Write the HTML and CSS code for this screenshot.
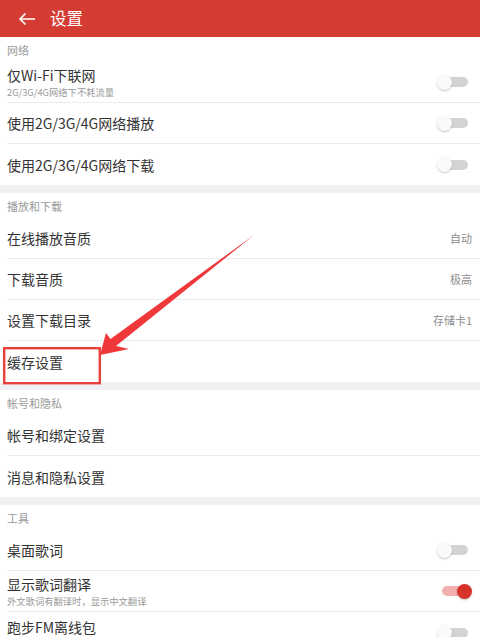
FILE: index.html
```html
<!DOCTYPE html>
<html lang="zh">
<head>
<meta charset="utf-8">
<link rel="stylesheet" href="styles.css">
</head>
<body>
<div class="page">
  <header class="topbar">
    <svg class="back" width="18" height="14" viewBox="0 0 18 14"><path d="M17 7H2M7.5 1.5L2 7l5.5 5.5" fill="none" stroke="#fff" stroke-width="1.6"/></svg>
    <span class="title">设置</span>
  </header>

  <section class="section">
    <div class="sec-title">网络</div>
    <div class="row">
      <div class="text"><div class="label">仅Wi-Fi下联网</div><div class="sub">2G/3G/4G网络下不耗流量</div></div>
      <span class="switch"><span class="track"></span><span class="thumb"></span></span>
    </div>
    <div class="row">
      <div class="label">使用2G/3G/4G网络播放</div>
      <span class="switch"><span class="track"></span><span class="thumb"></span></span>
    </div>
    <div class="row last">
      <div class="label">使用2G/3G/4G网络下载</div>
      <span class="switch"><span class="track"></span><span class="thumb"></span></span>
    </div>
  </section>

  <section class="section">
    <div class="sec-title">播放和下载</div>
    <div class="row"><div class="label">在线播放音质</div><span class="value">自动</span></div>
    <div class="row"><div class="label">下载音质</div><span class="value">极高</span></div>
    <div class="row"><div class="label">设置下载目录</div><span class="value">存储卡1</span></div>
    <div class="row last"><div class="label">缓存设置</div></div>
  </section>

  <section class="section">
    <div class="sec-title">帐号和隐私</div>
    <div class="row"><div class="label">帐号和绑定设置</div></div>
    <div class="row last"><div class="label">消息和隐私设置</div></div>
  </section>

  <section class="section">
    <div class="sec-title">工具</div>
    <div class="row">
      <div class="label">桌面歌词</div>
      <span class="switch"><span class="track"></span><span class="thumb"></span></span>
    </div>
    <div class="row">
      <div class="text"><div class="label">显示歌词翻译</div><div class="sub">外文歌词有翻译时，显示中文翻译</div></div>
      <span class="switch on"><span class="track"></span><span class="thumb"></span></span>
    </div>
    <div class="row last">
      <div class="label raised">跑步FM离线包</div>
      <span class="switch"><span class="track"></span><span class="thumb"></span></span>
    </div>
  </section>

  <svg class="annot" width="480" height="637" viewBox="0 0 480 637">
    <rect x="4.2" y="348.2" width="95.6" height="35" fill="none" stroke="#e8403b" stroke-width="2.4"/>
    <polygon points="100,355 106,333 110.5,339 254,235 116,346 129,349" fill="#f0383a"/>
  </svg>
</div>
</body>
</html>
```

FILE: styles.css
```css
* { box-sizing: border-box; }
html, body { margin: 0; padding: 0; }
body {
  background: #f0f0f2;
  font-family: "Noto Sans CJK SC", "Noto Sans", "Liberation Sans", sans-serif;
  color: #333;
}
.page {
  position: relative;
  width: 480px;
  height: 637px;
  overflow: hidden;
}
.topbar {
  height: 37px;
  background: #d43b33;
  display: flex;
  align-items: center;
  padding-left: 18px;
  color: #fff;
}
.back { display: block; }
.title {
  margin-left: 14px;
  font-size: 16.5px;
  line-height: 1;
}
.section {
  background: #fff;
}
.section + .section { margin-top: 8px; }
.sec-title {
  height: 25px;
  padding-left: 7px;
  padding-top: 1px;
  display: flex;
  align-items: center;
  font-size: 11px;
  color: #9a9a9a;
}
.row {
  height: 41px;
  margin-left: 7px;
  padding-right: 8px;
  border-bottom: 1px solid #ebebeb;
  display: flex;
  align-items: center;
  justify-content: space-between;
}
.row.last { border-bottom: none; }
.label {
  font-size: 14px;
  line-height: 18px;
  color: #333;
}
.label.raised { margin-bottom: 11px; }
.text { display: flex; flex-direction: column; }
.sub {
  font-size: 9.3px;
  line-height: 11px;
  color: #999;
  margin-top: 3px;
}
.value {
  font-size: 11px;
  color: #8c8c8c;
}
.switch {
  position: relative;
  width: 35px;
  height: 16px;
  flex: none;
}
.track {
  position: absolute;
  left: 6px;
  top: 3px;
  width: 25px;
  height: 10px;
  border-radius: 5px;
  background: #d3d3d3;
}
.thumb {
  position: absolute;
  left: 0;
  top: 0.5px;
  width: 15px;
  height: 15px;
  border-radius: 50%;
  background: #fafafa;
  box-shadow: 0 1px 2px rgba(0,0,0,0.22);
}
.switch.on .track { background: #f2b1ae; left: 5px; }
.switch.on .thumb { left: 20px; background: #d8322d; }
.annot {
  position: absolute;
  left: 0;
  top: 0;
  pointer-events: none;
}
```
